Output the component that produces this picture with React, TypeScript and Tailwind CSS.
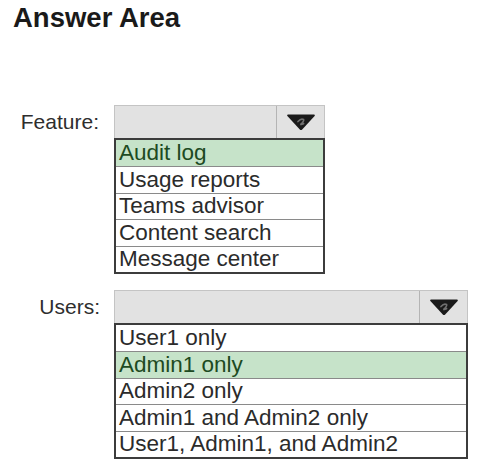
import React from "react";

const Arrow = () => (
  <svg width="30" height="18" viewBox="0 0 30 18">
    <path d="M2 1.5 L28 1.5 Q29.6 1.5 28.6 3 L16.2 16.4 Q15 17.6 13.8 16.4 L1.4 3 Q0.4 1.5 2 1.5 Z" fill="#1a1a1a" />
    <path d="M12 8.5 Q15 5.2 17.6 6.6 Q18.2 8.2 14.4 11.6 L17.6 10.6" stroke="#707070" strokeWidth="1.7" fill="none" strokeLinecap="round" />
  </svg>
);

type DDProps = { width: string; items: string[]; selected: number };

const Dropdown = ({ width, items, selected }: DDProps) => (
  <div className={`flex flex-col ${width}`}>
    <div className="flex h-[33px] bg-[#e2e2e2] border border-b-0 border-[#c4c4c4]">
      <div className="flex-1" />
      <div className="w-[48px] border-l border-[#b4b4b4] flex items-center justify-center">
        <Arrow />
      </div>
    </div>
    <div className="flex flex-col border-2 border-[#3c3c3c] bg-white">
      {items.map((it, i) => (
        <div
          key={it}
          className={`h-[26.4px] flex items-center pl-[3px] text-[22.5px] leading-[26px] ${
            i > 0 ? "border-t border-[#8a8a8a]" : ""
          } ${i === selected ? "bg-[#c6e3c9] text-[#1d4a22]" : "text-[#2b2b2b]"}`}
        >
          {it}
        </div>
      ))}
    </div>
  </div>
);

export default function App() {
  return (
    <div
      className="w-[480px] h-[474px] bg-white overflow-hidden"
      style={{ fontFamily: '"Liberation Sans", Arial, sans-serif' }}
    >
      <div className="pl-[13px] pt-[3px] text-[27.5px] leading-[30px] font-bold text-[#1a1a1a]">
        Answer Area
      </div>
      <div className="flex flex-col gap-[16px] mt-[72px]">
        <div className="flex items-start">
          <div className="w-[99px] h-[33px] flex items-center justify-end text-[21px] text-[#2e2e2e]">
            Feature:
          </div>
          <div className="ml-[15px]">
            <Dropdown
              width="w-[211px]"
              items={["Audit log", "Usage reports", "Teams advisor", "Content search", "Message center"]}
              selected={0}
            />
          </div>
        </div>
        <div className="flex items-start">
          <div className="w-[100px] h-[33px] flex items-center justify-end text-[21px] text-[#2e2e2e]">
            Users:
          </div>
          <div className="ml-[14px]">
            <Dropdown
              width="w-[354px]"
              items={[
                "User1 only",
                "Admin1 only",
                "Admin2 only",
                "Admin1 and Admin2 only",
                "User1, Admin1, and Admin2",
              ]}
              selected={1}
            />
          </div>
        </div>
      </div>
    </div>
  );
}
